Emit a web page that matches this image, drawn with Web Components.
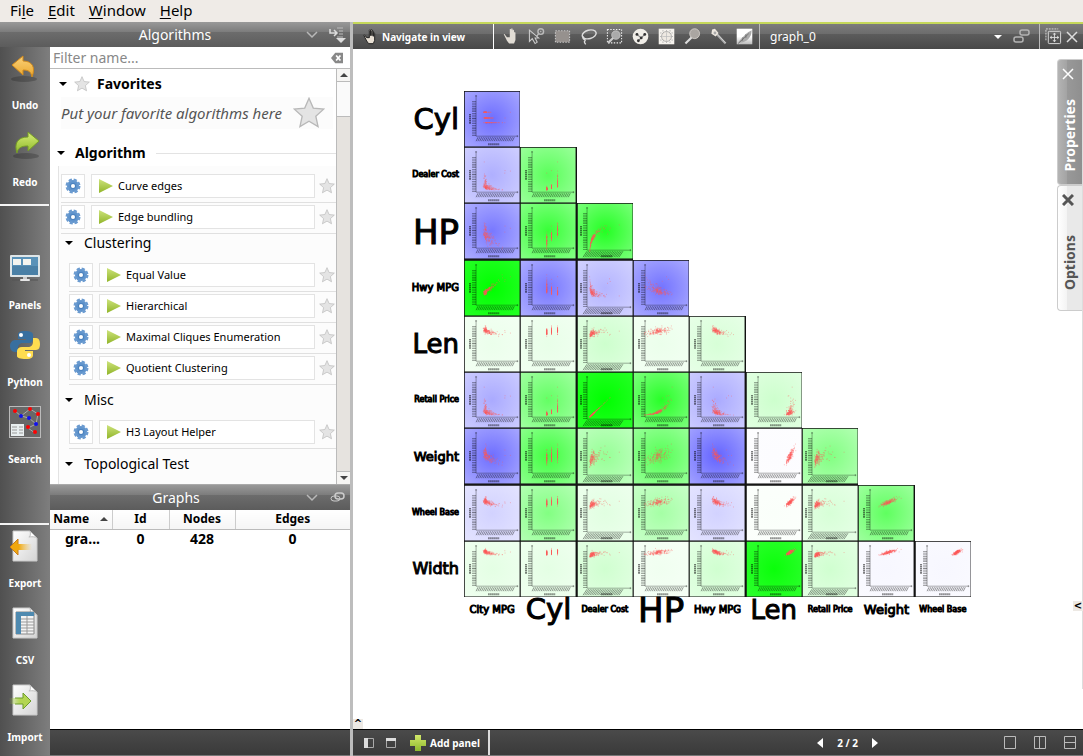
<!DOCTYPE html>
<html lang="en">
<head>
<meta charset="utf-8">
<title>Graph workspace</title>
<style>
    html, body { height: 100%; margin: 0; }
    body {
        display: flex;
        flex-direction: column;
        overflow: hidden;
        background: #bdbdbd;
        color: #000;
        font: 14px/18px "Noto Sans", "Open Sans", sans-serif;
    }
    main {
        flex: 1;
        min-height: 0;
        display: grid;
        grid-template-columns: 350px minmax(0, 1fr);
        gap: 3px;
    }
    .left, .right, .panels {
        display: flex;
        flex-direction: column;
        min-width: 0;
        min-height: 0;
    }
    .docks { flex: 1; display: flex; min-height: 0; }
    .panels { flex: 1; background: #fff; }
    .panels panel-header { --lead: 0px; }
    algorithm-panel { height: 438px; }
    graphs-table { flex: 1; }
    graph-view { flex: 1; }
</style>
</head>
<body>
<menu-bar></menu-bar>
<main>
    <div class="left">
        <panel-header icon="dock" label="Algorithms"></panel-header>
        <div class="docks">
            <tool-strip>
                <tool-button icon="undo">Undo</tool-button>
                <tool-button icon="redo">Redo</tool-button>
                <tool-button slot="middle" icon="panels">Panels</tool-button>
                <tool-button slot="middle" icon="python">Python</tool-button>
                <tool-button slot="middle" icon="search">Search</tool-button>
                <tool-button slot="bottom" icon="export">Export</tool-button>
                <tool-button slot="bottom" icon="csv">CSV</tool-button>
                <tool-button slot="bottom" icon="import">Import</tool-button>
            </tool-strip>
            <div class="panels">
                <algorithm-panel>
                    <algo-section label="Algorithm">
                        <algo-item>Curve edges</algo-item>
                        <algo-item>Edge bundling</algo-item>
                        <algo-group label="Clustering">
                            <algo-item>Equal Value</algo-item>
                            <algo-item>Hierarchical</algo-item>
                            <algo-item>Maximal Cliques Enumeration</algo-item>
                            <algo-item>Quotient Clustering</algo-item>
                        </algo-group>
                        <algo-group label="Misc">
                            <algo-item>H3 Layout Helper</algo-item>
                        </algo-group>
                        <algo-group label="Topological Test"></algo-group>
                    </algo-section>
                </algorithm-panel>
                <panel-header icon="chain" label="Graphs"></panel-header>
                <graphs-table></graphs-table>
                <bottom-bar></bottom-bar>
            </div>
        </div>
    </div>
    <div class="right">
        <view-toolbar></view-toolbar>
        <graph-view>
            <scatter-matrix></scatter-matrix>
            <side-tab slot="tabs" active>Properties</side-tab>
            <side-tab slot="tabs">Options</side-tab>
        </graph-view>
        <bottom-bar>
            <view-pager></view-pager>
        </bottom-bar>
    </div>
</main>

<script>
const star = "M12 1l3.200 7.300 7.800.800-5.900 5.300 1.700 7.800L12 18.200 5.200 22.200l1.700-7.800L1 9.100l7.800-.800z";
const hand = "M7 13L4 9c-1-1-2 0-1 1l4 8 3 4h7l2-5V7c0-2-2-2-2 0v4-7c0-2-2-2-2 0v6-8c0-2-2-2-2 0v8-7c0-2-3-2-2 0v10z";
const sheet = `<linearGradient id="s" x2="1" y2="1"><stop stop-color="#fff"/><stop offset="1" stop-color="#d4d4d4"/></linearGradient>
    <path d="M4 1h17l7 7v23H4z" fill="url(#s)" stroke="#c9c9c9"/><path d="M21 1c1 3 0 6-1 6s6-1 8 1z" fill="#fff" stroke="#bbb"/>`;

// name: [viewBox width, viewBox height, markup]
const ICONS = {
    undo: [32, 32, `<linearGradient id="g" y2="1" x2="0"><stop stop-color="#fbd27a"/><stop offset="1" stop-color="#eba72c"/></linearGradient>
        <ellipse cx="15" cy="27" rx="13" ry="3" fill="#0003"/><path d="M3 13L14 4v5c9 0 13 6 9 16-1-5-3-7-9-7v5z" fill="url(#g)" stroke="#d18a1d"/>`],
    redo: [32, 32, `<linearGradient id="g" y2="1" x2="0"><stop stop-color="#d8ee76"/><stop offset="1" stop-color="#8db92c"/></linearGradient>
        <ellipse cx="17" cy="27" rx="13" ry="3" fill="#0003"/><path d="M30 12L19 3v5C8 8 5 15 8 24c1-5 4-7 11-7v5z" fill="url(#g)" stroke="#769d26"/>`],
    panels: [32, 32, `<rect x="1" y="3" width="30" height="22" rx="1" fill="#dfe6e8"/><rect x="3" y="5" width="26" height="18" fill="#5a92b8"/>
        <path d="M3 14h26v9H3z" fill="#4a80a6"/><path d="M4 7h8v6H4zM14 7h8v6h-8z" fill="#f4f4ef"/><path d="M14 25h4v3h-4z" fill="#ccc"/><path d="M3 28h26" stroke="#555"/><rect x="11" y="27" width="10" height="2" rx="1" fill="#e6e6e6"/>`],
    python: [32, 32, `<path d="M16 2c-6 0-7 2-7 4v4h8v1H6c-3 0-5 3-5 6s2 6 5 6h3v-4c0-3 2-5 5-5h6c3 0 4-2 4-4V6c0-3-3-4-8-4z" fill="#386f9f"/>
        <path d="M17 30c6 0 7-2 7-4v-4h-8v-1h11c3 0 4-3 4-6s-1-6-4-6h-3v4c0 3-2 5-5 5h-6c-3 0-5 2-5 4v5c0 2 3 3 9 3z" fill="#ffdc4f"/><circle cx="12" cy="6" r="2" fill="#fff"/><circle cx="20" cy="26" r="2" fill="#fff"/>`],
    search: [32, 32, `<path d="M0 0h32v32H0z" fill="#686868" stroke="#bbb" stroke-width="2"/><path d="M6 5l6 5 9-7 8 5-2 10-7-6-8-2m15 8l-8 4 7 5" fill="none" stroke="#aaa"/>
        <g fill="#f00"><circle cx="6" cy="5" r="2"/><circle cx="21" cy="3" r="2"/><circle cx="29" cy="8" r="2"/><circle cx="19" cy="21" r="2"/><circle cx="26" cy="26" r="2"/></g>
        <g fill="#11e"><circle cx="12" cy="10" r="2"/><circle cx="20" cy="12" r="2"/><circle cx="27" cy="18" r="2"/></g><path d="M2 18h13v12H2z" fill="#e9eff0"/><path d="M3 21h5M3 24h5M3 27h5M10 21h4M10 24h4M10 27h4" stroke="#999"/>`],
    export: [32, 32, `${sheet}<linearGradient id="g"><stop offset=".4" stop-color="#f0a80e"/><stop offset="1" stop-color="#f3c04b00"/></linearGradient><path d="M1 17l8-8v5h14v6H9v5z" fill="url(#g)"/><path d="M9 14V9l-8 8 8 8v-5" fill="none" stroke="#c77c1c"/>`],
    csv: [32, 32, `${sheet}<path d="M7 5h18v22H7z" fill="#f4f4f4" stroke="#888"/><path d="M7 5h5v22H7zM7 5h18v4H7z" fill="#4f8ab0"/><path d="M12 12h13M12 15h13M12 18h13M12 21h13M12 24h13M18 9v18" stroke="#999"/>`],
    import: [32, 32, `${sheet}<linearGradient id="g"><stop stop-color="#9bc93500"/><stop offset=".5" stop-color="#b3d552"/></linearGradient><path d="M0 14h14V9l8 8-8 8v-5H0z" fill="url(#g)"/><path d="M6 14h8V9l8 8-8 8v-5H6" fill="none" stroke="#6d9c2a"/>`],
    chevron: [14, 14, `<path d="M2 4l5 5 5-5" fill="none" stroke="#b8b8b8" stroke-width="1.500"/>`],
    dock: [18, 18, `<path d="M1 3v4h6M5 4l3 3-3 3" fill="none" stroke="#ddd" stroke-width="1.500"/><path d="M8 2h6M10 5h4M10 8h4M8 11h6" stroke="#bbb"/><path d="M7 12h10l-5 5z" fill="#ddd"/>`],
    chain: [18, 18, `<rect x="2" y="7" width="9" height="5" rx="3" fill="none" stroke="#ccc"/><rect x="6" y="4" width="9" height="6" rx="3" fill="none" stroke="#ccc" stroke-width="1.500"/>`],
    links: [18, 18, `<rect x="1" y="9" width="9" height="5" rx="2" fill="none" stroke="#b4b4b4" stroke-width="1.500"/><rect x="7" y="2" width="9" height="5" rx="2" fill="none" stroke="#b4b4b4" stroke-width="1.500"/>`],
    clear: [16, 14, `<path d="M1 7l5-6h9v12H6z" fill="#888"/><path d="M7 4l5 6M12 4l-5 6" stroke="#fff" stroke-width="2"/>`],
    star: [24, 24, `<path d="${star}" fill="#e4e4e4" stroke="#b8b8b8"/>`],
    gear: [16, 16, `<circle cx="8" cy="8" r="6" fill="#5e93cc"/><circle cx="8" cy="8" r="6" fill="none" stroke="#6b9bd0" stroke-width="3" stroke-dasharray="3 1.700"/><circle cx="8" cy="8" r="3" fill="#4a80bd"/><circle cx="8" cy="8" r="2" fill="#fff"/>`],
    play: [16, 16, `<linearGradient id="g" x2="0" y2="1"><stop stop-color="#cde37b"/><stop offset="1" stop-color="#91b52a"/></linearGradient><path d="M1 1l14 7-14 7z" fill="url(#g)"/>`],
    fold: [8, 8, `<path d="M0 2h8L4 6z" fill="currentColor"/>`],
    sort: [8, 8, `<path d="M0 6h8L4 2z" fill="#444"/>`],
    hand: [24, 24, `<path d="${hand}" fill="#e2ddd5"/>`],
    handDark: [24, 24, `<path d="${hand}" fill="#e8e0d4" stroke="#222" stroke-width="1.500"/>`],
    pick: [24, 24, `<path d="M2 3v16l4-4 4 7 3-2-3-6h5z" fill="none" stroke="#ccc" stroke-width="1.500"/><circle cx="18" cy="5" r="4" fill="none" stroke="#bbb" stroke-width="2"/><circle cx="18" cy="5" r="1" fill="#bbb"/><path d="M15 8l-3 4" stroke="#bbb" stroke-width="2"/>`],
    rect: [24, 24, `<rect x="2" y="4" width="20" height="16" fill="#96918e" stroke="#c8c8c8" stroke-width="1.500" stroke-dasharray="2 2"/>`],
    lasso: [24, 24, `<ellipse cx="13" cy="9" rx="10" ry="6" transform="rotate(-15 13 9)" fill="none" stroke="#ddd" stroke-width="2"/><path d="M5 12c-3 4 4 4 2 6s-1 2 1 5" fill="none" stroke="#ddd" stroke-width="2"/>`],
    zoomBox: [24, 24, `<rect x="2" y="2" width="20" height="19" fill="none" stroke="#eee" stroke-dasharray="2 2" stroke-width="1.500"/><path d="M3 21l7-7" stroke="#ccc" stroke-width="3"/><circle cx="14" cy="10" r="6" fill="#aaa" stroke="#ccc"/>`],
    graph: [24, 24, `<circle cx="12" cy="12" r="11" fill="#f1eee8"/><path d="M7 9l6 5 5-5M13 14l-4 4" stroke="#888" stroke-width="1.500" fill="none"/><g fill="#333"><circle cx="7" cy="9" r="2"/><circle cx="18" cy="9" r="2"/><circle cx="13" cy="14" r="2"/><circle cx="9" cy="18" r="2"/></g>`],
    fisheye: [24, 24, `<path d="M1 1h22v22H1z" fill="#f6f3ee"/><g fill="none" stroke="#999"><path d="M3 7h18M3 12h18M3 17h18M7 3v18M12 3v18M17 3v18" stroke-dasharray="2 2"/></g><circle cx="12" cy="12" r="7" fill="#eee9e2" stroke="#999"/><path d="M6 12h12M12 6v12" stroke="#bbb"/>`],
    lens: [24, 24, `<path d="M2 22l9-9" stroke="#ddd" stroke-width="3"/><circle cx="15" cy="8" r="7" fill="#aaa6a2" stroke="#e0dcd6"/>`],
    key: [24, 24, `<path d="M9 8l13 14" stroke="#aaa" stroke-width="3"/><path d="M9 7l13 14" stroke="#ddd"/><path d="M3 2l4-1 5 6-4 5-6-4z" fill="#eee8e0"/><circle cx="7" cy="7" r="2" fill="#aaa"/>`],
    feather: [24, 24, `<linearGradient id="g" x2="0" y2="1"><stop offset=".5" stop-color="#fff"/><stop offset="1" stop-color="#bbb"/></linearGradient><path d="M1 1h22v22H1z" fill="url(#g)"/><path d="M3 21c3-6 6-7 10-12 3-3 6-4 9-6 0 7-3 14-12 17z" fill="#aaa"/><path d="M3 22L18 8M10 13l-1 5M14 9l0 5" stroke="#666"/>`],
    expand: [18, 18, `<path d="M1 13V1h13" fill="none" stroke="#ddd" stroke-dasharray="2 1"/><rect x="3.500" y="3.500" width="13" height="13" rx="1" fill="none" stroke="#ddd"/><path d="M10 6v8M6 10h8" stroke="#ddd"/><path d="M8 7l2-2 2 2zM8 13l2 2 2-2zM7 8l-2 2 2 2zM13 8l2 2-2 2z" fill="#ddd"/>`],
    cross: [12, 12, `<path d="M1 1l10 10M11 1L1 11" stroke="currentColor" stroke-width="1.500"/>`],
    crossBold: [12, 12, `<path d="M1 1l10 10M11 1L1 11" stroke="currentColor" stroke-width="3"/>`],
    plus: [16, 16, `<linearGradient id="g" x2="0" y2="1"><stop stop-color="#d2e86a"/><stop offset="1" stop-color="#8db92c"/></linearGradient><path d="M5 0h6v5h5v6h-5v5H5v-5H0V5h5z" fill="url(#g)"/>`],
    sideOpen: [12, 12, `<path d="M1.500 1.500h9v9h-9z" fill="none" stroke="#aaa"/><path d="M1 1h4v10H1z" fill="#ddd"/>`],
    topOpen: [12, 12, `<path d="M1.500 1.500h9v9h-9z" fill="none" stroke="#aaa"/><path d="M1 1h10v3H1z" fill="#ddd"/>`],
    prev: [8, 10, `<path d="M7 0v10L1 5z" fill="#fff"/>`],
    next: [8, 10, `<path d="M1 0v10l6-5z" fill="#fff"/>`],
    one: [14, 14, `<path d="M1.500.500h11v12h-11z" fill="none" stroke="#bbb"/>`],
    columns: [14, 14, `<path d="M1.500.500h11v12h-11zM6.500.500v12" fill="none" stroke="#bbb"/>`],
    rows: [14, 14, `<path d="M1.500.500h11v12h-11zM1.500 6.500h11" fill="none" stroke="#bbb"/>`]
};

const RESET = `
    :host, * { box-sizing: border-box; }
    button, input, select {
        margin: 0;
        padding: 0;
        border: 0;
        background: none;
        color: inherit;
        font: inherit;
    }
`;

class UiIcon extends HTMLElement {
    constructor() {
        super();
        this.attachShadow({ mode: "open" });
    }

    connectedCallback() {
        const [w, h, body] = ICONS[this.getAttribute("name")];
        const width = Number(this.getAttribute("size")) || w;
        this.shadowRoot.innerHTML = `
            <style>:host { display: inline-flex; flex: none; } svg { display: block; }</style>
            <svg width="${width}" height="${Math.round(width * h / w)}" viewBox="0 0 ${w} ${h}" aria-hidden="true">${body}</svg>
        `;
    }
}

class MenuBar extends HTMLElement {
    constructor() {
        super();
        this.attachShadow({ mode: "open" });
        this.shadowRoot.innerHTML = `
            <style>
                ${RESET}
                :host { display: block; background: #efebe7; font-size: 15px; }
                nav { display: flex; gap: 14px; height: 22px; padding: 0 10px 2px; }
                u { text-underline-offset: 2px; text-decoration-thickness: 1px; }
            </style>
            <nav>
                <button>Fi<u>l</u>e</button>
                <button><u>E</u>dit</button>
                <button><u>W</u>indow</button>
                <button><u>H</u>elp</button>
            </nav>
        `;
    }
}

class PanelHeader extends HTMLElement {
    constructor() {
        super();
        this.attachShadow({ mode: "open" });
    }

    connectedCallback() {
        const label = this.getAttribute("label");
        this.shadowRoot.innerHTML = `
            <style>
                ${RESET}
                :host {
                    display: grid;
                    grid-template-columns: var(--lead, 48px) 1fr 48px;
                    align-items: center;
                    flex: none;
                    height: 25px;
                    color: #fff;
                    background: linear-gradient(#999, #7c7c7c 40%, #6c6c6c 41%, #5c5c5c);
                }
                h2 { grid-column: 2; margin: 0; font: inherit; text-align: center; }
                div { display: flex; align-items: center; justify-content: flex-end; gap: 10px; padding-right: 3px; }
                button { display: flex; }
            </style>
            <h2>${label}</h2>
            <div>
                <button aria-label="Collapse ${label}"><ui-icon name="chevron"></ui-icon></button>
                <button aria-label="Dock ${label}"><ui-icon name="${this.getAttribute("icon")}"></ui-icon></button>
            </div>
        `;
    }
}

class ToolStrip extends HTMLElement {
    constructor() {
        super();
        this.attachShadow({ mode: "open" });
        this.shadowRoot.innerHTML = `
            <style>
                :host {
                    display: flex;
                    flex-direction: column;
                    flex: none;
                    width: 50px;
                    background: linear-gradient(90deg, #505050, #7e7e7e);
                }
                hr { width: 49px; height: 2px; margin: 3px 0 0; border: 0; background: #f4f4f4; }
                .middle { flex: 1; padding-top: 41px; }
            </style>
            <slot></slot>
            <hr>
            <div class="middle"><slot name="middle"></slot></div>
            <hr>
            <slot name="bottom"></slot>
        `;
    }
}

class ToolButton extends HTMLElement {
    constructor() {
        super();
        this.attachShadow({ mode: "open" });
    }

    connectedCallback() {
        this.shadowRoot.innerHTML = `
            <style>
                ${RESET}
                :host { display: block; }
                button {
                    display: flex;
                    flex-direction: column;
                    align-items: center;
                    gap: 14px;
                    width: 100%;
                    height: 77px;
                    padding-top: 5px;
                    color: #fff;
                    font-size: 10px;
                    font-weight: 700;
                    line-height: 14px;
                }
            </style>
            <button><ui-icon name="${this.getAttribute("icon")}" size="32"></ui-icon><slot></slot></button>
        `;
    }
}

class AlgorithmPanel extends HTMLElement {
    constructor() {
        super();
        this.attachShadow({ mode: "open" });
        this.shadowRoot.innerHTML = `
            <style>
                ${RESET}
                :host { display: flex; flex-direction: column; flex: none; background: #fff; border-bottom: 1px solid #aaa; }
                .filter { display: flex; align-items: center; flex: none; height: 22px; padding: 0 6px 0 3px; border-bottom: 1px solid #bbb; }
                input { flex: 1; min-width: 0; outline: 0; }
                input::placeholder { color: #888; opacity: 1; }
                button { display: flex; }
                .body { display: flex; flex: 1; min-height: 0; }
                .list { flex: 1; min-width: 0; overflow: hidden; padding-left: 8px; }
                .favorites { display: flex; align-items: center; gap: 7px; height: 30px; font-weight: 700; }
                .favorites button { padding-left: 1px; }
                .hint {
                    display: flex;
                    align-items: center;
                    justify-content: space-between;
                    height: 32px;
                    margin: -2px 3px 11px;
                    padding-right: 8px;
                    background: #fcfcfc;
                    color: #555;
                    font-size: 15px;
                    font-style: italic;
                }
                .scroll { display: flex; flex-direction: column; width: 14px; border-left: 1px solid #bbb; background: #e6e3df; }
                .scroll button { height: 13px; align-items: center; justify-content: center; background: #f6f5f3; border-bottom: 1px solid #bbb; color: #444; }
                .thumb { height: 35px; background: #fafafa; border-bottom: 1px solid #bbb; }
                .scroll button:last-child { margin-top: auto; border-top: 1px solid #bbb; border-bottom: 0; }
            </style>
            <div class="filter">
                <input type="text" placeholder="Filter name..." aria-label="Filter name">
                <button aria-label="Clear filter"><ui-icon name="clear" size="14"></ui-icon></button>
            </div>
            <div class="body">
                <div class="list">
                    <div class="favorites">
                        <button aria-label="Fold favorites"><ui-icon name="fold"></ui-icon></button><ui-icon name="star" size="16"></ui-icon><span>Favorites</span>
                    </div>
                    <div class="hint"><span>Put your favorite algorithms here</span><ui-icon name="star" size="32"></ui-icon></div>
                    <slot></slot>
                </div>
                <div class="scroll">
                    <button aria-label="Scroll up"><ui-icon name="sort"></ui-icon></button>
                    <div class="thumb"></div>
                    <button aria-label="Scroll down"><ui-icon name="fold"></ui-icon></button>
                </div>
            </div>
        `;
    }
}

class AlgoSection extends HTMLElement {
    constructor() {
        super();
        this.attachShadow({ mode: "open" });
    }

    connectedCallback() {
        this.shadowRoot.innerHTML = `
            <style>
                ${RESET}
                :host { display: block; }
                header { display: flex; align-items: center; gap: 10px; height: 26px; font-weight: 700; }
                header button { display: flex; margin-left: -1px; }
                header::after { content: ""; flex: 1; border-top: 1px solid #e3e3e3; }
                .items { padding: 6px 0 30px 2px; border-left: 1px solid #e3e3e3; background: #fcfcfc; }
            </style>
            <header><button aria-label="Fold"><ui-icon name="fold"></ui-icon></button><span>${this.getAttribute("label")}</span></header>
            <div class="items"><slot></slot></div>
        `;
    }
}

class AlgoGroup extends HTMLElement {
    constructor() {
        super();
        this.attachShadow({ mode: "open" });
    }

    connectedCallback() {
        this.shadowRoot.innerHTML = `
            <style>
                ${RESET}
                :host { display: block; padding-left: 8px; }
                header { display: flex; align-items: center; gap: 11px; margin: 6px 0 9px -4px; }
                :host(:first-of-type) header { margin-top: 0; }
                header button { display: flex; }
            </style>
            <header><button aria-label="Fold"><ui-icon name="fold"></ui-icon></button><span>${this.getAttribute("label")}</span></header>
            <slot></slot>
        `;
    }
}

class AlgoItem extends HTMLElement {
    constructor() {
        super();
        this.attachShadow({ mode: "open" });
        this.shadowRoot.innerHTML = `
            <style>
                ${RESET}
                :host {
                    display: flex;
                    gap: 6px;
                    height: 31px;
                    padding: 2px 1px 4px 0;
                    border-bottom: 1px solid #e0e0e0;
                    font-size: 11px;
                }
                button { display: flex; align-items: center; }
                .setup { justify-content: center; width: 24px; background: #fff; border: 1px solid #e3e3e3; }
                .run { flex: 1; gap: 4px; padding: 0 6px; background: #fff; border: 1px solid #e3e3e3; }
                .fav { margin-left: -2px; }
            </style>
            <button class="setup" aria-label="Parameters"><ui-icon name="gear"></ui-icon></button>
            <button class="run"><ui-icon name="play"></ui-icon><slot></slot></button>
            <button class="fav" aria-label="Add to favorites"><ui-icon name="star" size="16"></ui-icon></button>
        `;
    }
}

class GraphsTable extends HTMLElement {
    constructor() {
        super();
        this.attachShadow({ mode: "open" });
        this.shadowRoot.innerHTML = `
            <style>
                ${RESET}
                :host { display: block; background: #fff; }
                table { width: 100%; table-layout: fixed; border-collapse: collapse; text-align: center; font-weight: 700; }
                th { height: 19px; padding: 0; font-size: 12px; border-bottom: 1px solid #bbb; border-right: 1px solid #ccc; background: linear-gradient(#fff, #f5f5f5); }
                th:last-child { border-right: 0; }
                th span { margin-right: 11px; }
                td { padding: 0; font-size: 14px; }
                td:first-child { padding-left: 3px; }
            </style>
            <table>
                <colgroup><col style="width: 62px"><col style="width: 57px"><col style="width: 66px"><col></colgroup>
                <thead><tr><th><span>Name</span><ui-icon name="sort"></ui-icon></th><th>Id</th><th>Nodes</th><th>Edges</th></tr></thead>
                <tbody><tr><td>gra...</td><td>0</td><td>428</td><td>0</td></tr></tbody>
            </table>
        `;
    }
}

class BottomBar extends HTMLElement {
    constructor() {
        super();
        this.attachShadow({ mode: "open" });
        this.shadowRoot.innerHTML = `
            <style>
                ${RESET}
                :host {
                    display: block;
                    flex: none;
                    height: 27px;
                    border-top: 1px solid #000;
                    border-bottom: 1px solid #777;
                    background: linear-gradient(#4a4a4a, #3a3a3a);
                }
            </style>
            <slot></slot>
        `;
    }
}

class ViewPager extends HTMLElement {
    constructor() {
        super();
        this.attachShadow({ mode: "open" });
        this.shadowRoot.innerHTML = `
            <style>
                ${RESET}
                :host { display: flex; align-items: center; height: 25px; padding: 0 6px 0 10px; color: #fff; font-size: 10px; font-weight: 700; }
                button { display: flex; align-items: center; gap: 4px; }
                .open { display: flex; gap: 10px; margin-right: 13px; }
                .add { height: 25px; padding-right: 8px; border-right: 2px solid #ddd; }
                .pages { display: flex; align-items: center; gap: 13px; margin: 0 124px 0 auto; }
                .layouts { display: flex; gap: 16px; }
            </style>
            <div class="open">
                <button aria-label="Toggle side panel"><ui-icon name="sideOpen"></ui-icon></button>
                <button aria-label="Toggle top panel"><ui-icon name="topOpen"></ui-icon></button>
            </div>
            <button class="add"><ui-icon name="plus"></ui-icon>Add panel</button>
            <div class="pages">
                <button aria-label="Previous page"><ui-icon name="prev"></ui-icon></button>
                <span>2 / 2</span>
                <button aria-label="Next page"><ui-icon name="next"></ui-icon></button>
            </div>
            <div class="layouts">
                <button aria-label="Single view"><ui-icon name="one"></ui-icon></button>
                <button aria-label="Two columns"><ui-icon name="columns"></ui-icon></button>
                <button aria-label="Two rows"><ui-icon name="rows"></ui-icon></button>
            </div>
        `;
    }
}

class ViewToolbar extends HTMLElement {
    constructor() {
        super();
        this.attachShadow({ mode: "open" });
        const tools = ["hand", "pick", "rect", "lasso", "zoomBox", "graph", "fisheye", "lens", "key", "feather"];
        this.shadowRoot.innerHTML = `
            <style>
                ${RESET}
                :host {
                    display: flex;
                    flex: none;
                    height: 27px;
                    border-top: 2px solid #c5d85a;
                    background: linear-gradient(#7c7c7c, #6c6c6c 40%, #5c5c5c 41%, #484848);
                    color: #fff;
                }
                button { display: flex; align-items: center; justify-content: center; }
                .mode { justify-content: flex-start; gap: 4px; width: 141px; padding-left: 9px; border-right: 1px solid #fff; font-size: 10px; font-weight: 700; }
                .tools { display: flex; padding: 0 2px 0 3px; border-right: 1px solid #bbb; }
                .tools button { width: 26px; }
                .graph { display: flex; align-items: center; flex: 1; min-width: 0; padding-left: 10px; }
                select { appearance: none; flex: 1; min-width: 0; height: 25px; outline: 0; font-size: 12px; }
                .graph ui-icon { margin-right: 11px; }
                .link { width: 18px; }
                .ends { display: flex; gap: 4px; margin-left: 8px; padding: 0 5px; border-left: 1px solid #bbb; color: #ddd; }
            </style>
            <button class="mode"><ui-icon name="handDark" size="16"></ui-icon>Navigate in view</button>
            <div class="tools">
                ${tools.map(name => `<button aria-label="${name}"><ui-icon name="${name}" size="17"></ui-icon></button>`).join("")}
            </div>
            <div class="graph">
                <select aria-label="Graph"><option>graph_0</option></select>
                <ui-icon name="fold"></ui-icon>
            </div>
            <button class="link" aria-label="Link panels"><ui-icon name="links"></ui-icon></button>
            <div class="ends">
                <button aria-label="Expand"><ui-icon name="expand" size="17"></ui-icon></button>
                <button aria-label="Close"><ui-icon name="cross"></ui-icon></button>
            </div>
        `;
    }
}

class SideTab extends HTMLElement {
    constructor() {
        super();
        this.attachShadow({ mode: "open" });
        const close = this.hasAttribute("active") ? "cross" : "crossBold";
        this.shadowRoot.innerHTML = `
            <style>
                ${RESET}
                :host {
                    display: flex;
                    flex-direction: column;
                    align-items: center;
                    justify-content: space-between;
                    width: 25px;
                    height: 126px;
                    padding: 8px 4px 20px 0;
                    border: 1px solid #ccc;
                    border-right: 0;
                    border-radius: 4px 0 0 4px;
                    background: linear-gradient(90deg, #fff, #f4f4f4 36%, #e9e9e9 37%);
                    color: #555;
                    font-weight: 700;
                }
                :host([active]) {
                    padding-bottom: 12px;
                    background: linear-gradient(90deg, #b4b4b4, #a4a4a4 36%, #999 37%, #8f8f8f);
                    color: #fff;
                }
                button { display: flex; }
                .label { writing-mode: vertical-rl; transform: rotate(180deg); margin-right: -4px; }
            </style>
            <button aria-label="Close tab"><ui-icon name="${close}"></ui-icon></button>
            <button class="label"><slot></slot></button>
        `;
    }
}

class GraphView extends HTMLElement {
    constructor() {
        super();
        this.attachShadow({ mode: "open" });
        this.shadowRoot.innerHTML = `
            <style>
                ${RESET}
                :host { display: block; position: relative; min-height: 0; padding: 42px 0 0 58px; background: #fff; overflow: hidden; }
                /* docked over the canvas, on its right edge */
                .tabs { position: absolute; top: 10px; right: 0; display: flex; flex-direction: column; align-items: flex-end; height: 630px; border-right: 1px solid #ddd; }
                .grip { position: absolute; display: flex; align-items: center; justify-content: center; width: 10px; height: 10px; background: #ede9e4; font: 700 10px/10px "DejaVu Sans", sans-serif; }
                .down { left: 0; bottom: 0; }
                .side { right: 0; bottom: 118px; }
            </style>
            <slot></slot>
            <div class="tabs"><slot name="tabs"></slot></div>
            <button class="grip down" aria-label="Show bottom panel">^</button>
            <button class="grip side" aria-label="Show side panel">&lt;</button>
        `;
    }
}

// [name, font size that fills the label column]
const FIELDS = [
    ["City MPG", 10], ["Cyl", 29], ["Dealer Cost", 8], ["HP", 34], ["Hwy MPG", 10],
    ["Len", 26], ["Retail Price", 8], ["Weight", 13], ["Wheel Base", 8], ["Width", 16]
];

// one row per field from Cyl on: hue of the correlation and its lightness
const CORRELATION = [
    "b110",
    "b175 g90",
    "b120 g55 g35",
    "g0 b120 b180 b115",
    "g235 g232 g205 g235 g215",
    "b170 g100 g0 g40 b170 g205",
    "b110 g65 g150 g85 b100 b252 g130",
    "b210 g130 g225 g165 b210 g250 g215 g95",
    "g228 g228 g208 g240 g208 g10 g208 b247 b247"
].map(row => row.split(" "));

// cars as fractions of each axis, in the order of FIELDS
function makeCars(count) {
    let seed = 7;
    const rand = () => (seed = seed * 16807 % 2147483647) / 2147483647;
    const normal = () => rand() + rand() + rand() + rand() + rand() + rand() - 3;
    return Array.from({ length: count }, (_, i) => {
        const s = normal() * 1.3;
        const p = s * .7 + normal() * .9;
        const size = s * .7 + normal() * .8;
        const far = i % 70 === 0 ? .5 : 0;
        const cost = .02 + .08 * Math.exp(p * .8);
        const power = p + normal() * .6;
        return [
            .23 - .08 * s + .03 * s * s + normal() * .03 + far,
            power < -.5 ? .33 : power < .6 ? .45 : .6,
            cost + far * .8,
            .28 + .14 * p + normal() * .05 + far * .4,
            .35 - .08 * s + .02 * s * s + normal() * .04 + far * .6,
            .76 + .05 * size + normal() * .03,
            cost + normal() * .006 + far * .8,
            .42 + .1 * size + normal() * .05 + far * .2,
            .71 + .05 * size + normal() * .03,
            .86 + .035 * size + normal() * .025
        ];
    });
}

const ticks = (from, to, step, y, dx, dy) => {
    let d = "";
    for (let x = from; x < to; x += step) d += `M${x.toFixed(1)} ${y}l${dx} ${dy}`;
    return d;
};

class ScatterMatrix extends HTMLElement {
    constructor() {
        super();
        this.attachShadow({ mode: "open" });
        this.cars = makeCars(180);

        const label = ([name, size], edge, place) => `<span class="${edge}" style="${place}; font-size: ${size}px">${name}</span>`;
        const rows = CORRELATION.map((row, r) =>
            label(FIELDS[r + 1], "row", `grid-row: ${r + 1}`) + row.map((code, c) => this.plot(code, c, r + 1)).join("")
        );
        this.shadowRoot.innerHTML = `
            <style>
                :host {
                    display: grid;
                    grid-template-columns: 53px repeat(9, 1fr);
                    grid-template-rows: repeat(9, 1fr) 26px;
                    width: 560px;
                    height: 532px;
                    font-family: "DejaVu Sans", sans-serif;
                }
                span { display: flex; align-items: center; line-height: 1; white-space: nowrap; -webkit-text-stroke: 1px #000; }
                .row { grid-column: 1; justify-content: flex-end; padding-right: 5px; }
                .col { grid-row: 10; justify-content: center; }
                svg { display: block; width: 100%; height: 100%; }
            </style>
            ${rows.join("")}
            ${FIELDS.slice(0, 9).map((field, i) => label(field, "col", `grid-column: ${i + 2}`)).join("")}
        `;
    }

    plot(code, xField, yField) {
        const light = Number(code.slice(1));
        const rgb = v => code[0] === "b" ? `rgb(${v},${v},255)` : `rgb(${v},255,${v})`;
        const outer = Math.round(light + (255 - light) * (light < 20 ? .15 : .4));
        const id = `fill-${xField}-${yField}`;
        const wide = xField === 2 || xField === 6;
        const left = wide ? 10 : 12;
        const base = wide ? 47 : 45;

        const dots = this.cars.map(car => {
            const x = (left + 1 + car[xField] * 40).toFixed(1);
            const y = (base - 1 - Math.min(car[yField], 1) * 38).toFixed(1);
            return `M${x} ${y}h.8`;
        }).join("");
        const names = wide ? ticks(10, 47, 1.7, 48, -4, 6) : ticks(14, 50, 1.8, 46, -2, 4);
        return `
            <svg style="grid-area: ${yField} / ${xField + 2}" viewBox="0 0 56 56" preserveAspectRatio="none" role="img" aria-label="${FIELDS[yField][0]} against ${FIELDS[xField][0]}">
                <radialGradient id="${id}" r=".7"><stop stop-color="${rgb(light)}"/><stop offset="1" stop-color="${rgb(outer)}"/></radialGradient>
                <rect width="56" height="56" fill="url(#${id})" stroke="#111" stroke-width="1.500"/>
                <path d="M${left} 4V${base}H54M${left - 1} 5h2M53 ${base - 1}v2" fill="none" stroke="#000" stroke-opacity=".55" stroke-width=".6"/>
                <path d="M${left - 2} 10V${base}" stroke="#000" stroke-opacity=".45" stroke-width="4" stroke-dasharray=".8 .9"/>
                <path d="M${left - 6} 23v10" stroke="#000" stroke-opacity=".5" stroke-width="2" stroke-dasharray="1.500 .5"/>
                <path d="${names}" stroke="#000" stroke-opacity=".5" stroke-width=".8"/>
                <path d="M24 53h11" stroke="#000" stroke-opacity=".5" stroke-width="2" stroke-dasharray="1.500 .5"/>
                <path d="${dots}" stroke="#ff5a5a" stroke-opacity=".55" stroke-width=".8"/>
            </svg>
        `;
    }
}

customElements.define("ui-icon", UiIcon);
customElements.define("menu-bar", MenuBar);
customElements.define("panel-header", PanelHeader);
customElements.define("tool-strip", ToolStrip);
customElements.define("tool-button", ToolButton);
customElements.define("algorithm-panel", AlgorithmPanel);
customElements.define("algo-section", AlgoSection);
customElements.define("algo-group", AlgoGroup);
customElements.define("algo-item", AlgoItem);
customElements.define("graphs-table", GraphsTable);
customElements.define("bottom-bar", BottomBar);
customElements.define("view-pager", ViewPager);
customElements.define("view-toolbar", ViewToolbar);
customElements.define("side-tab", SideTab);
customElements.define("graph-view", GraphView);
customElements.define("scatter-matrix", ScatterMatrix);
</script>
</body>
</html>
